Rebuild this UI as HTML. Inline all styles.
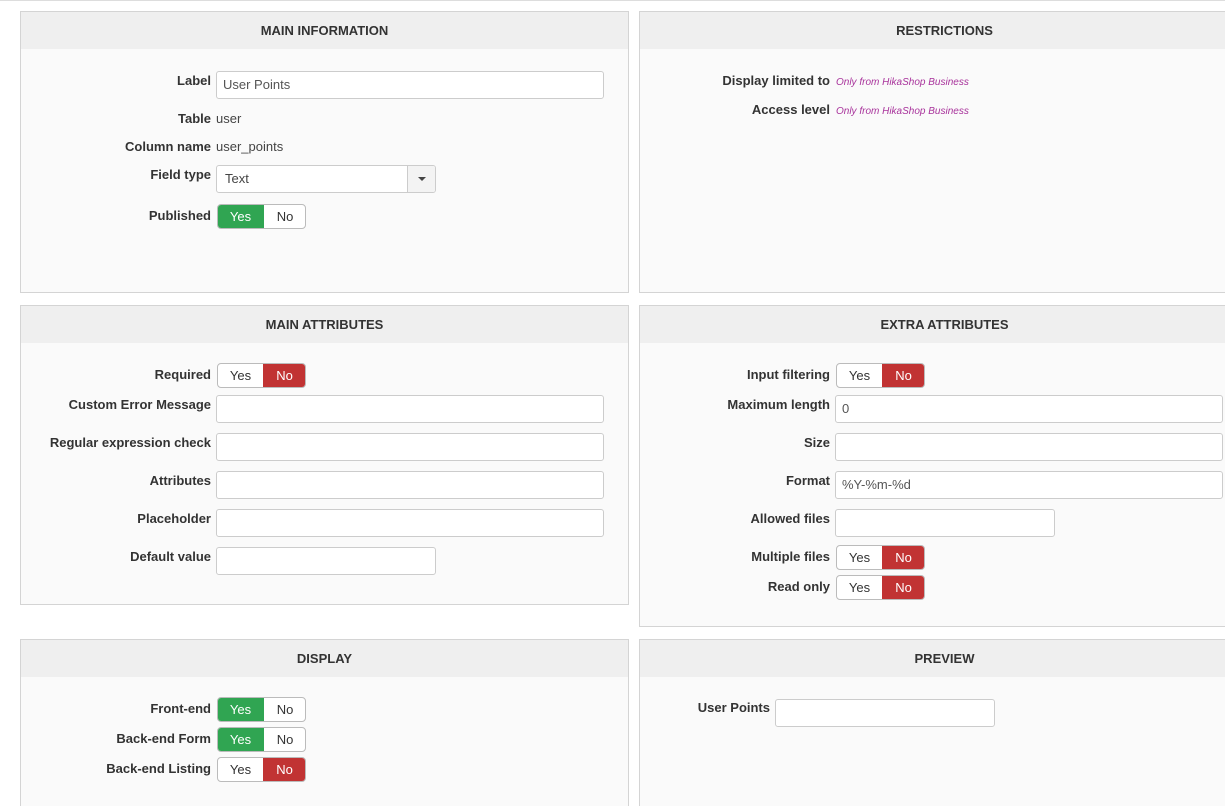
<!DOCTYPE html>
<html><head><meta charset="utf-8">
<style>
html,body{margin:0;padding:0;background:#fff;width:1225px;height:806px;overflow:hidden;}
#w{position:relative;width:1225px;height:806px;overflow:hidden;font-family:"Liberation Sans",Arial,sans-serif;font-size:13px;color:#333;}
.top{position:absolute;left:0;top:0;width:1225px;height:1px;background:#ddd;}
.panel{position:absolute;box-sizing:border-box;background:#fafafa;border:1px solid #d4d4d4;}
.head{position:absolute;box-sizing:border-box;height:37px;background:#efefef;text-align:center;font-weight:bold;font-size:13px;line-height:37px;color:#333;left:0;right:0;top:0;}
.l{position:absolute;text-align:right;font-weight:bold;font-size:13px;line-height:18px;height:18px;white-space:nowrap;color:#333;}
.t{position:absolute;font-size:13px;line-height:18px;white-space:nowrap;color:#444;}
.i{position:absolute;box-sizing:border-box;height:28px;background:#fff;border:1px solid #ccc;border-radius:3px;font-size:13px;line-height:25px;padding-left:6px;color:#555;white-space:nowrap;}
.b{position:absolute;box-sizing:border-box;height:25px;width:89px;border:1px solid #bbb;border-radius:4px;background:#fff;overflow:hidden;font-size:13px;}
.b span{position:absolute;top:-1px;bottom:-1px;text-align:center;line-height:25px;color:#333;}
.y{left:-1px;width:47px;}
.n{left:45px;width:43px;}
.g{background:#30a552;color:#fff !important;width:47px;}
.y.g + .n{left:46px;width:42px;}
.r{background:#c13333;color:#fff !important;}
.m{position:absolute;font-size:10px;font-style:italic;color:#a8329b;white-space:nowrap;line-height:12px;}
</style></head><body><div id="w">
<div class="top"></div>

<div class="panel" style="left:20px;top:11px;width:609px;height:282px"><div class="head">MAIN INFORMATION</div></div>
<div class="panel" style="left:639px;top:11px;width:600px;height:282px"><div class="head" style="width:609px;right:auto">RESTRICTIONS</div></div>
<div class="panel" style="left:20px;top:305px;width:609px;height:300px"><div class="head">MAIN ATTRIBUTES</div></div>
<div class="panel" style="left:639px;top:305px;width:600px;height:322px"><div class="head" style="width:609px;right:auto">EXTRA ATTRIBUTES</div></div>
<div class="panel" style="left:20px;top:639px;width:609px;height:190px"><div class="head">DISPLAY</div></div>
<div class="panel" style="left:639px;top:639px;width:600px;height:190px"><div class="head" style="width:609px;right:auto">PREVIEW</div></div>

<div class="l" style="right:1014px;top:72px">Label</div>
<div class="i" style="left:216px;top:71px;width:388px">User Points</div>
<div class="l" style="right:1014px;top:110px">Table</div>
<div class="t" style="left:216px;top:110px">user</div>
<div class="l" style="right:1014px;top:138px">Column name</div>
<div class="t" style="left:216px;top:138px">user_points</div>
<div class="l" style="right:1014px;top:166px">Field type</div>
<div class="i" style="left:216px;top:165px;width:220px;padding-left:8px;color:#444">Text
  <div style="position:absolute;right:0;top:0;bottom:0;width:27px;background:#f3f3f3;border-left:1px solid #ccc;border-radius:0 2px 2px 0"><div style="position:absolute;left:10px;top:11px;width:0;height:0;border-left:4px solid transparent;border-right:4px solid transparent;border-top:4px solid #444"></div></div>
</div>
<div class="l" style="right:1014px;top:207px">Published</div>
<div class="b" style="left:217px;top:204px"><span class="y g">Yes</span><span class="n">No</span></div>

<div class="l" style="right:395px;top:72px">Display limited to</div>
<div class="m" style="left:836px;top:77px">Only from HikaShop Business</div>
<div class="l" style="right:395px;top:101px">Access level</div>
<div class="m" style="left:836px;top:106px">Only from HikaShop Business</div>

<div class="l" style="right:1014px;top:366px">Required</div>
<div class="b" style="left:217px;top:363px"><span class="y">Yes</span><span class="n r">No</span></div>
<div class="l" style="right:1014px;top:396px">Custom Error Message</div>
<div class="i" style="left:216px;top:395px;width:388px"></div>
<div class="l" style="right:1014px;top:434px">Regular expression check</div>
<div class="i" style="left:216px;top:433px;width:388px"></div>
<div class="l" style="right:1014px;top:472px">Attributes</div>
<div class="i" style="left:216px;top:471px;width:388px"></div>
<div class="l" style="right:1014px;top:510px">Placeholder</div>
<div class="i" style="left:216px;top:509px;width:388px"></div>
<div class="l" style="right:1014px;top:548px">Default value</div>
<div class="i" style="left:216px;top:547px;width:220px"></div>

<div class="l" style="right:395px;top:366px">Input filtering</div>
<div class="b" style="left:836px;top:363px"><span class="y">Yes</span><span class="n r">No</span></div>
<div class="l" style="right:395px;top:396px">Maximum length</div>
<div class="i" style="left:835px;top:395px;width:388px">0</div>
<div class="l" style="right:395px;top:434px">Size</div>
<div class="i" style="left:835px;top:433px;width:388px"></div>
<div class="l" style="right:395px;top:472px">Format</div>
<div class="i" style="left:835px;top:471px;width:388px">%Y-%m-%d</div>
<div class="l" style="right:395px;top:510px">Allowed files</div>
<div class="i" style="left:835px;top:509px;width:220px"></div>
<div class="l" style="right:395px;top:548px">Multiple files</div>
<div class="b" style="left:836px;top:545px"><span class="y">Yes</span><span class="n r">No</span></div>
<div class="l" style="right:395px;top:578px">Read only</div>
<div class="b" style="left:836px;top:575px"><span class="y">Yes</span><span class="n r">No</span></div>

<div class="l" style="right:1014px;top:700px">Front-end</div>
<div class="b" style="left:217px;top:697px"><span class="y g">Yes</span><span class="n">No</span></div>
<div class="l" style="right:1014px;top:730px">Back-end Form</div>
<div class="b" style="left:217px;top:727px"><span class="y g">Yes</span><span class="n">No</span></div>
<div class="l" style="right:1014px;top:760px">Back-end Listing</div>
<div class="b" style="left:217px;top:757px"><span class="y">Yes</span><span class="n r">No</span></div>

<div class="l" style="right:455px;top:699px">User Points</div>
<div class="i" style="left:775px;top:699px;width:220px"></div>
</div></body></html>
